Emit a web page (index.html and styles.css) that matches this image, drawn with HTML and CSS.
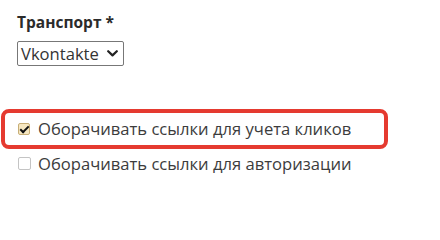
FILE: index.html
```html
<!DOCTYPE html>
<html lang="ru">
<head>
<meta charset="utf-8">
<link rel="stylesheet" href="styles.css">
</head>
<body>
<div class="page">
  <div class="field">
    <div class="title">Транспорт *</div>
    <div class="select">
      <span class="select-value">Vkontakte</span>
      <svg class="chev" width="11" height="7" viewBox="0 0 11 7"><path d="M1.2 1.2 L5.5 5.4 L9.8 1.2" fill="none" stroke="#222" stroke-width="2.2" stroke-linecap="round" stroke-linejoin="round"/></svg>
    </div>
  </div>
  <div class="options">
    <label class="opt marked">
      <span class="box checked"></span>
      <span class="opt-text">Оборачивать ссылки для учета кликов</span>
      <span class="highlight"></span>
    </label>
    <label class="opt">
      <span class="box"></span>
      <span class="opt-text">Оборачивать ссылки для авторизации</span>
    </label>
  </div>
</div>
</body>
</html>
```

FILE: styles.css
```css
html, body {
  margin: 0;
  padding: 0;
  background: #fff;
}
body {
  font-family: "Open Sans", "Lato", sans-serif;
  color: #333;
}
.page {
  padding: 12px 0 0 17px;
}
.title {
  font-size: 15.5px;
  font-weight: 700;
  line-height: 20px;
  color: #2b2b2b;
}
.select {
  margin-top: 9px;
  width: 107px;
  height: 25px;
  box-sizing: border-box;
  border: 1px solid #777;
  border-radius: 2px;
  display: flex;
  align-items: center;
  justify-content: space-between;
  padding: 0 5px 0 3px;
  font-size: 16.6px;
  color: #333;
}
.chev {
  display: block;
}
.options {
  margin-top: 52px;
  display: flex;
  flex-direction: column;
  gap: 14px;
}
.opt {
  position: relative;
  display: flex;
  align-items: center;
  gap: 7px;
  height: 21px;
  font-size: 16.6px;
  color: #3c3c3c;
}
.box {
  width: 13px;
  height: 13px;
  box-sizing: border-box;
  margin-left: 1px;
  border: 1px solid #c4c4c4;
  border-radius: 2px;
  background: #fff;
  position: relative;
  flex: none;
}
.box.checked {
  width: 12px;
  height: 12px;
  margin-right: 1px;
  background: #f6e7c1;
  border-color: #c7ae77;
}
.box.checked::after {
  content: "";
  position: absolute;
  left: 3px;
  top: 0px;
  width: 3px;
  height: 7px;
  border-right: 2px solid #111;
  border-bottom: 2px solid #111;
  transform: rotate(45deg);
}
.highlight {
  position: absolute;
  left: -16px;
  top: -9px;
  width: 387px;
  height: 40px;
  box-sizing: border-box;
  border: 4px solid #e53a30;
  border-radius: 8px;
  pointer-events: none;
}
```
